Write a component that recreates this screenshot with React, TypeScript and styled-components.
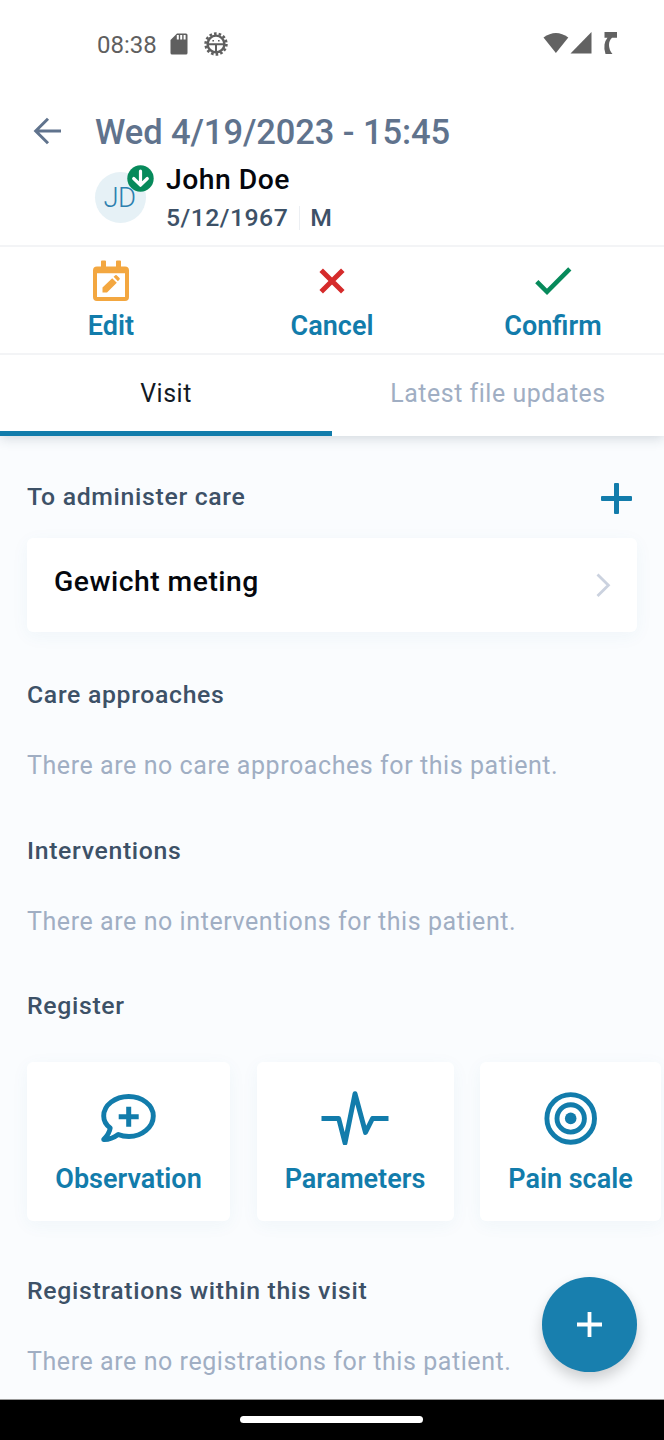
import React from "react";
import styled, { createGlobalStyle } from "styled-components";

const GlobalStyle = createGlobalStyle`
  * { box-sizing: border-box; }
  body { margin: 0; background: #fff; font-family: Roboto, sans-serif; }
  button { font: inherit; border: 0; padding: 0; background: none; color: inherit; }
  h1, h2, p { margin: 0; }
  svg { display: block; flex: none; }
`;

const Screen = styled.div`
  width: 664px;
  height: 1440px;
  display: flex;
  flex-direction: column;
  overflow: hidden;
  background: #fafcfe;
`;

const TopArea = styled.div`
  flex: none;
  position: relative;
  background: #fff;
  box-shadow: 0 2px 12px rgba(40, 60, 80, 0.2);
`;

const StatusBar = styled.div`
  height: 88px;
  padding: 0 47px 0 97px;
  display: flex;
  align-items: center;
  color: #5f5f5f;
`;

const Clock = styled.span`
  width: 73px;
  font-size: 24px;
  line-height: 30px;
  padding-top: 1px;
`;

const StatusGroup = styled.div<{ $gap: number; $end?: boolean }>`
  display: flex;
  align-items: center;
  gap: ${(p) => p.$gap}px;
  margin-left: ${(p) => (p.$end ? "auto" : "0")};
`;

const Header = styled.header`
  height: 159px;
  padding: 24px 28px 0 33px;
  display: grid;
  grid-template-columns: 62px 1fr;
  grid-template-rows: 40px 1fr;
  border-bottom: 2px solid #f3f4f6;
`;

const BackButton = styled.button`
  display: flex;
  align-items: center;
  height: 38px;
`;

const Title = styled.h1`
  font-size: 34.5px;
  line-height: 40px;
  font-weight: 500;
  letter-spacing: -0.09px;
  color: #60738d;
  white-space: nowrap;
`;

const Patient = styled.div`
  grid-column: 2;
  display: flex;
  gap: 20px;
`;

const Avatar = styled.div`
  position: relative;
  width: 51px;
  height: 51px;
  margin-top: 20px;
  padding-right: 2px;
  border-radius: 50%;
  background: #e6f1f6;
  color: #2c80af;
  font-size: 27.5px;
  font-weight: 300;
  letter-spacing: -0.5px;
  line-height: 51px;
  text-align: center;
`;

const AvatarBadge = styled.span`
  position: absolute;
  top: -7px;
  left: 32px;
`;

const PatientName = styled.p`
  font-size: 28.3px;
  line-height: 34px;
  font-weight: 500;
  letter-spacing: 0.5px;
  color: #05070d;
  padding-top: 11px;
`;

const PatientMeta = styled.div`
  display: flex;
  align-items: center;
  height: 24px;
  margin-top: 9px;
  font-size: 24.8px;
  line-height: 24px;
  font-weight: 500;
  letter-spacing: 0.47px;
  color: #3d5167;
`;

const MetaDivider = styled.span`
  width: 1px;
  height: 24px;
  margin: 0 10px 0 11px;
  background: #eceff3;
`;

const Actions = styled.div`
  height: 108px;
  display: grid;
  grid-template-columns: repeat(3, 221px);
  justify-content: center;
  border-bottom: 2px solid #f3f4f6;
`;

const Action = styled.button`
  display: flex;
  flex-direction: column;
  align-items: center;
`;

const ActionIcon = styled.span`
  height: 61px;
  padding-top: 13px;
`;

const ActionLabel = styled.span`
  font-size: 27px;
  line-height: 36px;
  font-weight: 600;
  color: #127cab;
  white-space: nowrap;
`;

const Tabs = styled.div`
  height: 81px;
  display: grid;
  grid-template-columns: 1fr 1fr;
`;

const Tab = styled.button<{ $active?: boolean }>`
  padding-bottom: ${(p) => (p.$active ? 0 : 5)}px;
  font-size: 24.9px;
  letter-spacing: 0.55px;
  color: ${(p) => (p.$active ? "#131a24" : "#a0aec3")};
  border-bottom: ${(p) => (p.$active ? "5px solid #127cab" : "0")};
`;

const Content = styled.main`
  flex: 1;
  min-height: 0;
  padding: 43px 0 0 27px;
  overflow: hidden;
`;

const SectionHead = styled.div`
  height: 36px;
  padding-right: 32px;
  display: flex;
  align-items: center;
  justify-content: space-between;
`;

const AddButton = styled.button`
  padding-top: 3px;
`;

const SectionTitle = styled.h2`
  font-size: 24.8px;
  line-height: 36px;
  font-weight: 500;
  letter-spacing: 0.67px;
  color: #3d5167;
  white-space: nowrap;
`;

const EmptyText = styled.p`
  margin: 35px 0 48.5px;
  font-size: 25px;
  line-height: 36px;
  letter-spacing: 0.57px;
  color: #a0aec3;
  white-space: nowrap;
`;

const CareItem = styled.div`
  height: 94.5px;
  margin: 22.5px 27px 45px 0;
  padding: 0 26px 0 27px;
  display: flex;
  align-items: center;
  justify-content: space-between;
  border-radius: 6px;
  background: #fff;
  box-shadow: 0 4px 18px rgba(30, 110, 160, 0.05);
`;

const CareName = styled.span`
  padding-bottom: 7px;
  font-size: 28.3px;
  font-weight: 500;
  letter-spacing: 0.5px;
  color: #05070d;
`;

const Tiles = styled.div`
  display: flex;
  margin: 38px 0 52px;
`;

const Tile = styled.button<{ $width: number; $after: number }>`
  flex: none;
  width: ${(p) => p.$width}px;
  height: 159px;
  margin-right: ${(p) => p.$after}px;
  padding-top: 28.5px;
  display: flex;
  flex-direction: column;
  align-items: center;
  gap: 16.5px;
  border-radius: 6px;
  background: #fff;
  box-shadow: 0 4px 18px rgba(30, 110, 160, 0.05);
`;

const Fab = styled.button`
  position: absolute;
  left: 542.4px;
  top: 1277.4px;
  width: 94.6px;
  height: 94.6px;
  display: flex;
  align-items: center;
  justify-content: center;
  border-radius: 50%;
  background: #187fae;
  box-shadow: 0 7px 14px rgba(0, 0, 0, 0.18);
`;

const NavBar = styled.div`
  flex: none;
  height: 41px;
  display: flex;
  justify-content: center;
  border-top: 1px solid #999;
  background: #000;
`;

const NavHandle = styled.div`
  width: 183px;
  height: 7px;
  margin: 16px 1px 0 0;
  border-radius: 4px;
  background: #fff;
`;

const BLUE = "#127cab";

const SdCardIcon = () => (
  <svg width="18" height="22" viewBox="0 0 18 22">
    <path d="M7 .5h9a1.5 1.5 0 0 1 1.5 1.5v18a1.5 1.5 0 0 1-1.5 1.5H2A1.5 1.5 0 0 1 .5 20V7z" fill="#5f5f5f" />
    <path d="M7.800 2v4.500M11.200 2v4.500M14.600 2v4.500" stroke="#fff" strokeWidth="2" />
  </svg>
);

const BugGearIcon = () => (
  <svg width="24" height="24" viewBox="0 0 24 24" fill="none" stroke="#5f5f5f">
    <circle cx="12" cy="12" r="10.400" strokeWidth="2.600" strokeDasharray="2.600 2.067" />
    <circle cx="12" cy="12" r="8.400" strokeWidth="2.400" />
    <path d="M3 12.300h18M12 12v9" strokeWidth="2" />
    <path d="M8.400 8.800h1.600M14 8.800h1.600" strokeWidth="1.400" />
  </svg>
);

const SignalIcons = () => (
  <svg width="74" height="24" viewBox="0 0 74 24" fill="#626262">
    <path d="M.500 5.500Q12.900-3.700 25.300 5.500L12.900 21z" />
    <path d="M48.500 0V21.500H27.500z" />
    <path d="M61.500 0H74V5.800H69Q66 8.500 66 13Q66 18 69.500 22H62.500Q60.800 17.500 61.500 12.500Q62.200 8.500 64.500 5.800H61.500z" />
  </svg>
);

const BackIcon = () => (
  <svg width="28" height="28" viewBox="0 0 28 28" fill="none" stroke="#60738d" strokeWidth="3">
    <path d="M28 14H3M15 1.700L2.700 14L15 26.300" />
  </svg>
);

const ArrowBadgeIcon = () => (
  <svg width="27" height="27" viewBox="0 0 27 27">
    <circle cx="13.500" cy="13.500" r="13.200" fill="#078a5b" />
    <path d="M13.500 6.200V19.500M6.700 13.500L13.500 20.200L20.300 13.500" fill="none" stroke="#fff" strokeWidth="3.200" strokeLinecap="round" strokeLinejoin="round" />
  </svg>
);

const EditIcon = () => (
  <svg width="36" height="42" viewBox="0 0 36 42" fill="#f3a740">
    <path fillRule="evenodd" d="M8 1.500Q8 .5 9 .5h3q1 0 1 1v5h10v-5q0-1 1-1h3q1 0 1 1v5h4q4 0 4 4v26.500q0 4-4 4H4q-4 0-4-4v-26.500q0-4 4-4h4zM4 13.300V37h28V13.300z" />
    <path d="M9.500 27.500L19.200 18.200L23.800 22.700L14 32.500H9.500zM20.600 16.800L22.300 15.200Q23 14.600 23.700 15.200L26.500 18Q27.200 18.700 26.500 19.400L24.900 21.200z" />
  </svg>
);

const CancelIcon = () => (
  <svg width="26" height="42" viewBox="0 0 26 42" fill="none" stroke="#d52b2b" strokeWidth="5">
    <path d="M2.200 10.200L23.800 31.800M23.800 10.200L2.200 31.800" />
  </svg>
);

const ConfirmIcon = () => (
  <svg width="38" height="42" viewBox="0 0 38 42" fill="none" stroke="#078a5b" strokeWidth="4.600">
    <path d="M2.800 21.700L13 31.800L35.800 8.900" />
  </svg>
);

const PlusIcon = () => (
  <svg width="31" height="31" viewBox="0 0 31 31" fill={BLUE}>
    <rect x="13" width="5" height="31" rx="1" />
    <rect y="13" width="31" height="5" rx="1" />
  </svg>
);

const ChevronIcon = () => (
  <svg width="15" height="24" viewBox="0 0 15 24" fill="none" stroke="#cbd2df" strokeWidth="2.800">
    <path d="M1.500 1.500L12.400 12.200L1.500 23" />
  </svg>
);

const ObservationIcon = () => (
  <svg width="68" height="54" viewBox="0 0 68 54" fill="none" stroke={BLUE} strokeLinejoin="round" strokeLinecap="round">
    <path d="M33.700 5.500C47 5.500 58.300 14 58.300 25S47 45.500 34 45.500C30 45.500 26.500 44.900 23.200 43.500C19.500 46.200 14 48.700 8.700 48.500C12.500 44.500 14.700 41 15.200 37C11.200 34 8.700 30 8.700 25C8.700 14 20 5.500 33.700 5.500Z" strokeWidth="4.900" />
    <path d="M33.700 15.800V35.800M23.700 25.800H43.700" strokeWidth="5" strokeLinecap="butt" />
  </svg>
);

const PulseIcon = () => (
  <svg width="68" height="54" viewBox="0 0 68 54" fill="none" stroke={BLUE} strokeWidth="4.900" strokeLinejoin="round">
    <path d="M.500 27.500H17.700L24 52L34 2.700L44.500 41.500L51.500 27.500H67.500" />
  </svg>
);

const TargetIcon = () => (
  <svg width="68" height="54" viewBox="0 0 68 54" fill="none" stroke={BLUE} strokeWidth="4.900">
    <circle cx="33.700" cy="27.400" r="23.800" />
    <circle cx="33.700" cy="27.400" r="13.700" />
    <circle cx="33.700" cy="27.400" r="5.800" fill={BLUE} stroke="none" />
  </svg>
);

const FabPlusIcon = () => (
  <svg width="25" height="25" viewBox="0 0 25 25" fill="#fff">
    <path d="M10.600 0h3.800v10.600H25v3.800H14.400V25h-3.800V14.400H0v-3.800h10.600z" />
  </svg>
);

export default function App() {
  return (
    <>
      <GlobalStyle />
      <Screen>
        <TopArea>
          <StatusBar>
            <Clock>08:38</Clock>
            <StatusGroup $gap={16}>
              <SdCardIcon />
              <BugGearIcon />
            </StatusGroup>
            <StatusGroup $gap={0} $end>
              <SignalIcons />
            </StatusGroup>
          </StatusBar>
          <Header>
            <BackButton aria-label="Back"><BackIcon /></BackButton>
            <Title>Wed 4/19/2023 - 15:45</Title>
            <Patient>
              <Avatar>
                JD
                <AvatarBadge><ArrowBadgeIcon /></AvatarBadge>
              </Avatar>
              <div>
                <PatientName>John Doe</PatientName>
                <PatientMeta>
                  <span>5/12/1967</span>
                  <MetaDivider />
                  <span>M</span>
                </PatientMeta>
              </div>
            </Patient>
          </Header>
          <Actions>
            <Action><ActionIcon><EditIcon /></ActionIcon><ActionLabel>Edit</ActionLabel></Action>
            <Action><ActionIcon><CancelIcon /></ActionIcon><ActionLabel>Cancel</ActionLabel></Action>
            <Action><ActionIcon><ConfirmIcon /></ActionIcon><ActionLabel>Confirm</ActionLabel></Action>
          </Actions>
          <Tabs>
            <Tab $active>Visit</Tab>
            <Tab>Latest file updates</Tab>
          </Tabs>
        </TopArea>
        <Content>
          <SectionHead>
            <SectionTitle>To administer care</SectionTitle>
            <AddButton aria-label="Add care"><PlusIcon /></AddButton>
          </SectionHead>
          <CareItem>
            <CareName>Gewicht meting</CareName>
            <ChevronIcon />
          </CareItem>
          <SectionTitle>Care approaches</SectionTitle>
          <EmptyText>There are no care approaches for this patient.</EmptyText>
          <SectionTitle>Interventions</SectionTitle>
          <EmptyText>There are no interventions for this patient.</EmptyText>
          <SectionTitle>Register</SectionTitle>
          <Tiles>
            <Tile $width={203} $after={26.5}><ObservationIcon /><ActionLabel>Observation</ActionLabel></Tile>
            <Tile $width={197} $after={26.5}><PulseIcon /><ActionLabel>Parameters</ActionLabel></Tile>
            <Tile $width={181} $after={0}><TargetIcon /><ActionLabel>Pain scale</ActionLabel></Tile>
          </Tiles>
          <SectionTitle>Registrations within this visit</SectionTitle>
          <EmptyText>There are no registrations for this patient.</EmptyText>
        </Content>
        <Fab aria-label="Add"><FabPlusIcon /></Fab>
        <NavBar><NavHandle /></NavBar>
      </Screen>
    </>
  );
}
